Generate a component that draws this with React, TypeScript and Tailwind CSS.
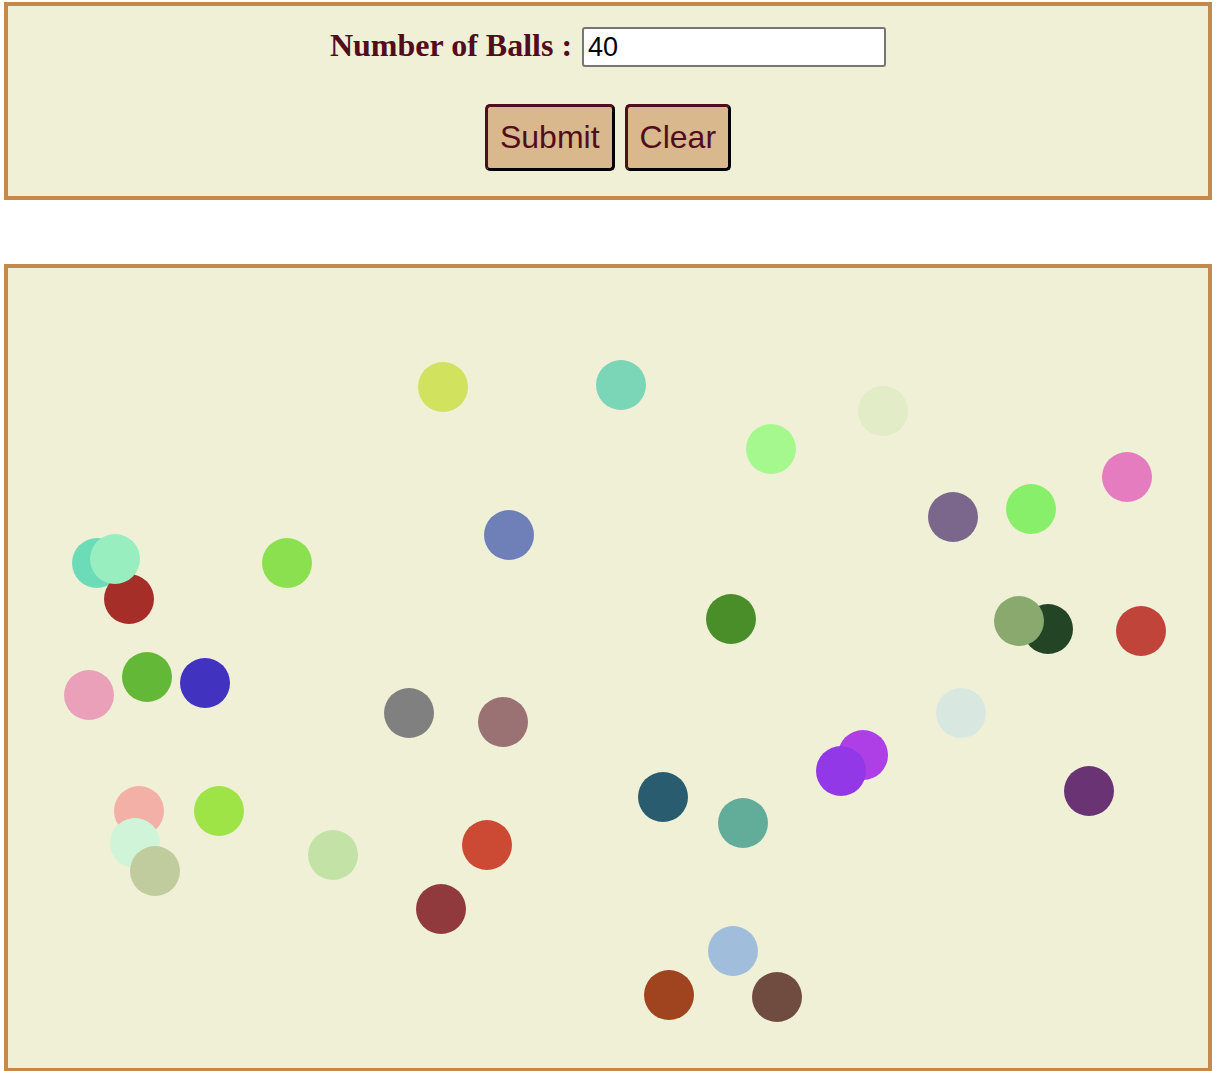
import { useState } from "react";

interface Ball {
  x: number;
  y: number;
  color: string;
}

// centres measured in page coordinates, panel inner origin is (8, 268)
const BALLS: Ball[] = [
  { x: 443, y: 387, color: "#d0e25e" },
  { x: 621, y: 385, color: "#7ad6b6" },
  { x: 883, y: 411, color: "#e2ecc6" },
  { x: 771, y: 449, color: "#a4f88e" },
  { x: 1127, y: 477, color: "#e67cc0" },
  { x: 953, y: 517, color: "#7a678b" },
  { x: 1031, y: 509, color: "#88ef6a" },
  { x: 509, y: 535, color: "#6f80b8" },
  { x: 97, y: 563, color: "#6cdcb8" },
  { x: 129, y: 599, color: "#a52e28" },
  { x: 115, y: 559, color: "#98eebe" },
  { x: 287, y: 563, color: "#8ae04e" },
  { x: 731, y: 619, color: "#4a8e2a" },
  { x: 1048, y: 629, color: "#234425" },
  { x: 1019, y: 621, color: "#8aa96e" },
  { x: 1141, y: 631, color: "#c0443a" },
  { x: 89, y: 695, color: "#eaa0b9" },
  { x: 147, y: 677, color: "#64b838" },
  { x: 205, y: 683, color: "#4232c0" },
  { x: 409, y: 713, color: "#7f807f" },
  { x: 503, y: 722, color: "#9a7274" },
  { x: 961, y: 713, color: "#d8e8e0" },
  { x: 863, y: 755, color: "#ae3ee6" },
  { x: 841, y: 771, color: "#9338e6" },
  { x: 1089, y: 791, color: "#6a3474" },
  { x: 663, y: 797, color: "#285c6e" },
  { x: 743, y: 823, color: "#62ac9a" },
  { x: 139, y: 811, color: "#f2b0a6" },
  { x: 219, y: 811, color: "#9ee446" },
  { x: 135, y: 843, color: "#d0f4d8" },
  { x: 155, y: 871, color: "#c0cc9e" },
  { x: 333, y: 855, color: "#c2e2a6" },
  { x: 487, y: 845, color: "#cc4a34" },
  { x: 441, y: 909, color: "#903a3e" },
  { x: 733, y: 951, color: "#a0bedc" },
  { x: 669, y: 995, color: "#a04420" },
  { x: 777, y: 997, color: "#704c40" },
];

function ActionButton({ label, onClick }: { label: string; onClick?: () => void }) {
  return (
    <button
      onClick={onClick}
      className="px-3 py-3 bg-[#d8b88c] text-[#520c1e] text-[32px] leading-[37px] rounded-[5px] border-[3px] border-t-[#520c1e] border-l-[#520c1e] border-b-black border-r-black font-['Liberation_Sans',Arial,sans-serif]"
    >
      {label}
    </button>
  );
}

export default function App() {
  const [count, setCount] = useState("40");

  return (
    <div className="bg-white min-h-screen pt-[2px] pl-[4px]">
      <div className="w-[1208px] h-[198px] border-4 border-[#c4894b] bg-[#f0f0d7] flex flex-col items-center pt-[21px]">
        <div className="flex items-center h-[40px] gap-[10px]">
          <label className="mb-[4px] text-[32px] font-bold text-[#520c1e] font-['Liberation_Serif','Times_New_Roman',serif]">
            Number of Balls :
          </label>
          <input
            value={count}
            onChange={(e) => setCount(e.target.value)}
            className="w-[304px] h-[40px] bg-white border-2 border-[#767676] rounded-[3px] px-[4px] text-[27px] text-black font-['Liberation_Sans',Arial,sans-serif] outline-none"
          />
        </div>
        <div className="flex gap-[10px] mt-[37px]">
          <ActionButton label="Submit" />
          <ActionButton label="Clear" onClick={() => setCount("")} />
        </div>
      </div>

      <div className="relative mt-[64px] w-[1208px] h-[808px] border-4 border-[#c4894b] bg-[#f0f0d7] overflow-hidden">
        {BALLS.map((b, i) => (
          <div
            key={i}
            className="absolute w-[50px] h-[50px] rounded-full"
            style={{ left: b.x - 25 - 8, top: b.y - 25 - 268, backgroundColor: b.color }}
          />
        ))}
      </div>
    </div>
  );
}
